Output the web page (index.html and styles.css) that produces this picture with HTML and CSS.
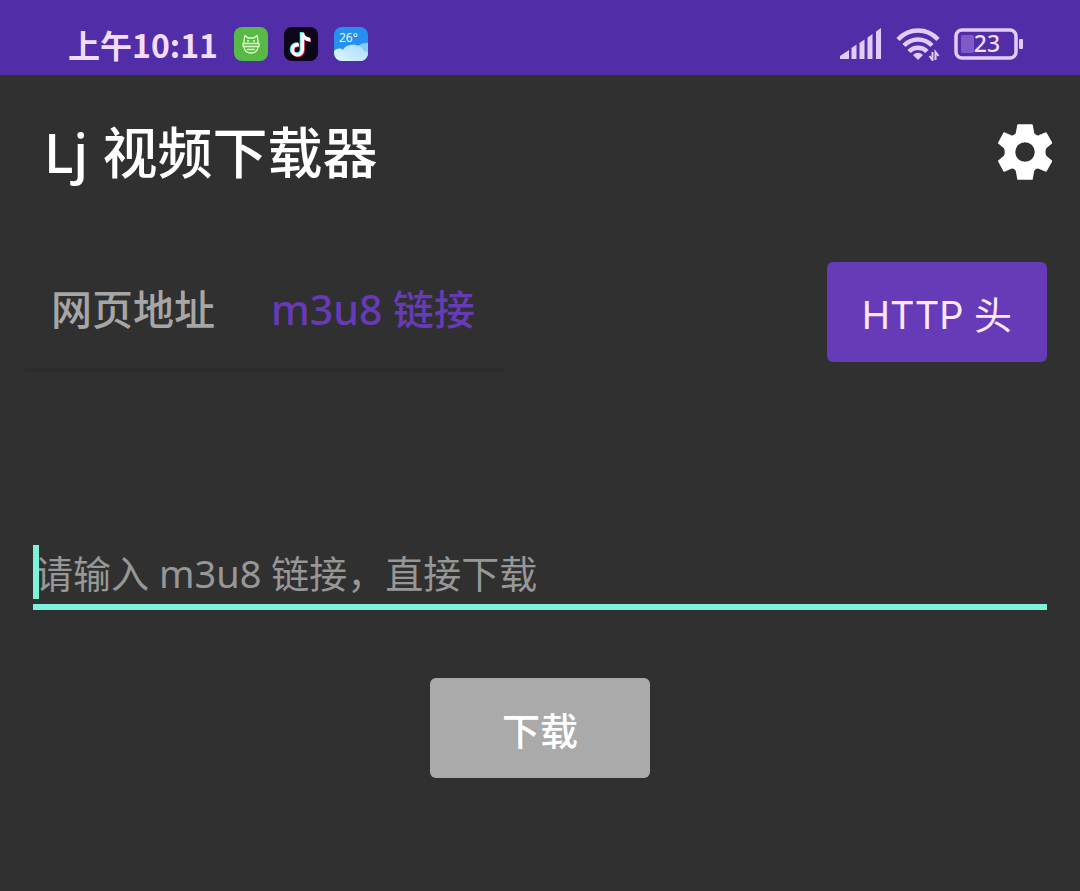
FILE: index.html
```html
<!DOCTYPE html>
<html lang="zh-CN">
<head>
<meta charset="utf-8">
<meta name="viewport" content="width=device-width, initial-scale=1">
<title>Lj 视频下载器</title>
<link rel="stylesheet" href="styles.css">
</head>
<body>
<div class="status-bar">
  <div class="status-left">
    <span class="clock">上午10:11</span>
    <svg class="app-icon" viewBox="0 0 34 34" aria-hidden="true">
      <rect width="34" height="34" rx="8" fill="#58b947"/>
      <g fill="none" stroke="#dcffc8" stroke-width="1.3" stroke-linejoin="round" stroke-linecap="round">
        <path d="M10 16v-3l1-4.500 3 2.500h6l3-2.500L24 13v3"/>
        <path d="M9 16.500h16v3H9zM10 20c.5 4 3.500 6 7 6s6.500-2 7-6M13.500 22.500h7"/>
      </g>
      <circle cx="14" cy="14" r="1" fill="#dcffc8"/><circle cx="20" cy="14" r="1" fill="#dcffc8"/>
    </svg>
    <svg class="app-icon" viewBox="0 0 34 34" aria-hidden="true">
      <rect width="34" height="34" rx="8" fill="#0b0716"/>
      <g fill="none" stroke-width="3.600">
        <path d="M17.500 5v17a5 5 0 1 1-5-5h1.500M17.500 5c0 4 3.500 7 8 7" stroke="#38dfe4"/>
        <path d="M19 6.500V23.500a5 5 0 1 1-5-5h1.500M19 6.500c0 4 3.500 7 8 7" stroke="#f5365c"/>
        <path d="M18.300 5.700v17a5 5 0 1 1-5-5h1.500M18.300 5.700c0 4 3.500 7 8 7" stroke="#fff"/>
      </g>
    </svg>
    <svg class="app-icon" viewBox="0 0 34 34" aria-hidden="true">
      <defs>
        <clipPath id="weather-clip"><rect width="34" height="34" rx="8"/></clipPath>
        <linearGradient id="cloud" x1="0" y1="1" x2="1" y2="0"><stop offset="0" stop-color="#e2f6ff"/><stop offset="1" stop-color="#a5dcff"/></linearGradient>
      </defs>
      <g clip-path="url(#weather-clip)">
        <rect width="34" height="34" fill="#268ff2"/>
        <path d="M22 24c0-5 6-9 12-8v18H20z" fill="#86c9fa"/>
        <path d="M0 24c3-3 7-3 9-1 3-7 18-7 21 1l4 1v9H0z" fill="url(#cloud)"/>
        <text class="weather-text" x="5" y="15">26°</text>
      </g>
    </svg>
  </div>
  <div class="status-right">
    <svg class="signal" viewBox="0 0 42 32" aria-hidden="true">
      <path d="M0 31v-3l9-6v9zM11.500 31V20l5-3.500V31zM19.500 31V15l5-3.500V31zM27.500 31V9.500l5-3.500v25zM36 31V3.500L41 0v31z" fill="#e2cdfa"/>
    </svg>
    <svg class="wifi" viewBox="0 0 44 34" aria-hidden="true">
      <g fill="none" stroke="#e2cdfa" stroke-width="4.500">
        <path d="M2 12.500c11-12 29-12 40 0M8 18.500c8-8 20-8 28 0M13 24.500c5-5 13-5 18 0"/>
      </g>
      <path d="M17 28q5-4.500 10 0l-5 5z" fill="#e2cdfa"/>
      <path d="M33.500 29l3 4V25M42.500 29l-3-4v8" fill="none" stroke="#e2cdfa" stroke-width="2"/>
    </svg>
    <svg class="battery" viewBox="0 0 70 32" role="img" aria-label="23%">
      <rect x="2" y="2" width="60" height="28" rx="6" fill="none" stroke="#e2cdfa" stroke-width="3.500"/>
      <rect x="7" y="7" width="13" height="18" rx="2" fill="#805bc8"/>
      <rect x="65" y="11" width="4" height="10" rx="1" fill="#e2cdfa"/>
      <text class="battery-text" x="33" y="24" text-anchor="middle">23</text>
    </svg>
  </div>
</div>

<header class="app-header">
  <h1 class="title">Lj 视频下载器</h1>
  <button class="settings" type="button" aria-label="设置">
    <svg class="gear" viewBox="0 0 54 56" aria-hidden="true">
      <path fill="#fff" stroke="#fff" stroke-width="1.500" stroke-linejoin="round" fill-rule="evenodd" d="M20 1h14l1.500 8.500Q38 13 41 12l7-3 5.500 10-6 5q-1.500 4 0 8l6 5-5.500 10-7-3q-3-1-5.500 2.500L34 55H20l-1.500-8.500Q16 43 13 44l-7 3L.7 37l6-5q1.500-4 0-8l-6-5L6 9l7 3q3 1 5.500-2.500zM27 17.500a10.500 10.500 0 1 0 0 21 10.500 10.500 0 0 0 0-21z"/>
    </svg>
  </button>
</header>

<main class="content">
  <div class="toolbar">
    <div class="tabs" role="tablist">
      <button class="tab" type="button" role="tab" aria-selected="false">网页地址</button>
      <button class="tab tab-active" type="button" role="tab" aria-selected="true">m3u8 链接</button>
    </div>
    <button class="button button-http" type="button">HTTP 头</button>
  </div>
  <form class="download-form">
    <div class="field">
      <input class="url-input" type="text" aria-label="m3u8 链接" placeholder="请输入 m3u8 链接，直接下载">
      <span class="cursor"></span>
    </div>
    <button class="button button-download" type="button">下载</button>
  </form>
</main>
</body>
</html>
```
FILE: styles.css
```css
* {
  box-sizing: border-box;
}

body {
  margin: 0;
  min-height: 100vh;
  background: #303030;
  color: #fff;
  font-family: "Noto Sans", "Noto Sans CJK SC", sans-serif;
}

button,
input {
  margin: 0;
  padding: 0;
  border: 0;
  background: none;
  color: inherit;
  font-family: inherit;
}

svg {
  display: block;
}

.status-bar {
  display: flex;
  justify-content: space-between;
  align-items: center;
  height: 75px;
  padding: 12px 56px 0 68px;
  background: #512da8;
}

.status-left {
  display: flex;
  align-items: center;
  gap: 16px;
}

.clock {
  color: #f3dcff;
  font-size: 32px;
  font-weight: 600;
  line-height: 48px;
  font-family: "Noto Sans CJK SC", sans-serif;
}

.app-icon {
  width: 34px;
  height: 34px;
}

.weather-text {
  fill: #e8f7ff;
  font-size: 12px;
}

.status-right {
  display: flex;
  align-items: center;
  gap: 14px;
}

.signal {
  width: 42px;
  height: 32px;
}

.wifi {
  width: 44px;
  height: 34px;
}

.battery {
  width: 70px;
  height: 32px;
}

.battery-text {
  fill: #f3dcff;
  font-size: 23px;
  font-weight: 500;
}

.app-header {
  display: flex;
  justify-content: space-between;
  align-items: center;
  padding: 37px 28px 0 44px;
}

.title {
  margin: 0;
  font-family: "Noto Sans", "Noto Sans CJK SC", sans-serif;
  font-size: 55px;
  font-weight: 500;
  line-height: 80px;
}

.gear {
  width: 54px;
  height: 56px;
}

.content {
  padding: 70px 33px 0;
}

.toolbar {
  display: flex;
  justify-content: space-between;
  align-items: flex-start;
}

.tabs {
  display: flex;
  margin-left: -8px;
  border-bottom: 4px solid #2c2c2c;
}

.tab {
  padding: 0 30px 12px 26px;
  color: #a6a6a6;
  font-size: 41px;
  font-weight: 500;
  line-height: 94px;
  height: 106px;
}

.tab-active {
  color: #673ab7;
}

.button {
  width: 220px;
  height: 100px;
  border-radius: 6px;
  font-size: 38px;
}

.button-http {
  background: #673ab7;
  color: #ffe6ff;
  font-family: Inter, "Noto Sans CJK SC", sans-serif;
}

.download-form {
  display: flex;
  flex-direction: column;
  align-items: center;
  gap: 68px;
  padding-top: 171px;
}

.field {
  position: relative;
  width: 100%;
}

.url-input {
  display: block;
  width: 100%;
  height: 67px;
  padding: 0 2px 2px;
  border-bottom: 6px solid #7df3da;
  font-size: 38px;
  outline: none;
}

.url-input::placeholder {
  color: #979797;
  opacity: 1;
}

.cursor {
  position: absolute;
  left: 0;
  top: 2px;
  width: 6px;
  height: 54px;
  background: #7df3da;
}

.button-download {
  background: #aaa;
  font-weight: 500;
}
```
